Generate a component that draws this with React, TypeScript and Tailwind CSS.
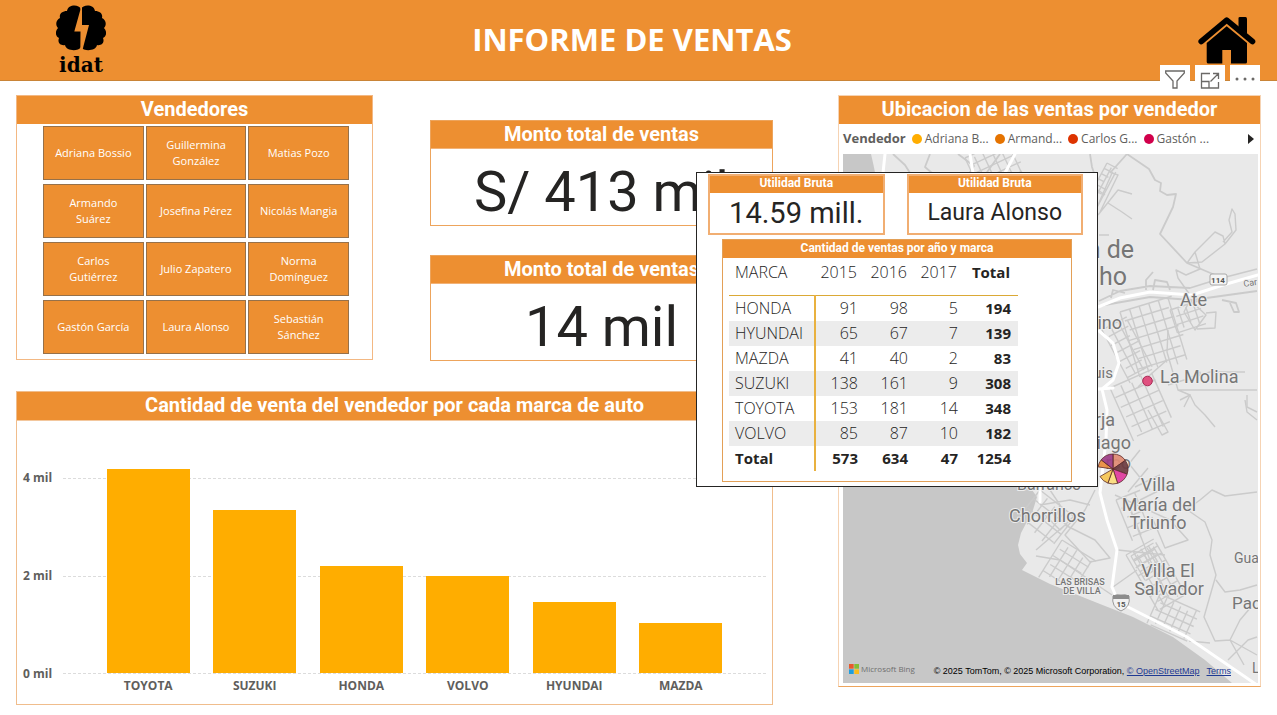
import React from "react";

const SELLERS = [
  "Adriana Bossio",
  "Guillermina González",
  "Matias Pozo",
  "Armando Suárez",
  "Josefina Pérez",
  "Nicolás Mangia",
  "Carlos Gutiérrez",
  "Julio Zapatero",
  "Norma Domínguez",
  "Gastón García",
  "Laura Alonso",
  "Sebastián Sánchez",
];

const BARS = [
  { label: "TOYOTA", value: 4.19 },
  { label: "SUZUKI", value: 3.35 },
  { label: "HONDA", value: 2.2 },
  { label: "VOLVO", value: 2.0 },
  { label: "HYUNDAI", value: 1.46 },
  { label: "MAZDA", value: 1.03 },
];

const ROWS = [
  ["HONDA", 91, 98, 5, 194],
  ["HYUNDAI", 65, 67, 7, 139],
  ["MAZDA", 41, 40, 2, 83],
  ["SUZUKI", 138, 161, 9, 308],
  ["TOYOTA", 153, 181, 14, 348],
  ["VOLVO", 85, 87, 10, 182],
];

const LEGEND = [
  { name: "Adriana B...", dot: "bg-[#ffad00]" },
  { name: "Armand...", dot: "bg-[#e57300]" },
  { name: "Carlos G...", dot: "bg-[#dd3300]" },
  { name: "Gastón ...", dot: "bg-[#d1004b]" },
];

function Logo() {
  return (
    <div className="flex w-[50px] flex-col items-center gap-[2px] pt-[2px]">
      <svg viewBox="0 0 50 46" className="h-[46px] w-[50px]" aria-hidden="true">
        <path d="M25 4C23-1 12-1 11 6C6 6 3 9 4 13C0 15-1 20 2 23C-1 26-1 31 3 33C1 38 5 41 9 40C10 46 22 47 25 42Z" />
        <path d="M25 4C27-1 38-1 39 6C44 6 47 9 46 13C50 15 51 20 48 23C51 26 51 31 47 33C49 38 45 41 41 40C40 46 28 47 25 42Z" />
        <path d="M24.500 0L24.300 5L18.300 26.500H24.500L24.300 46H26.300L27.500 41L33 20H26L26 0Z" fill="#ed8f31" />
      </svg>
      <span className="font-['DejaVu_Serif',serif] text-[20px] leading-[24px] font-bold text-black">idat</span>
    </div>
  );
}

function HomeIcon() {
  return (
    <svg viewBox="0 0 58 48" className="h-[48px] w-[58px]" aria-hidden="true">
      <path d="M40.500 2Q40.500 1 42 1H47.500Q49 1 49 3V18L40.500 11Z" />
      <path d="M3.200 25.500L28.700 4.200L54.500 25.500" fill="none" stroke="#000" strokeWidth="5.600" strokeLinecap="round" strokeLinejoin="round" />
      <path d="M8.700 27L28.700 10.300L49 27V46Q49 47.500 47.500 47.500H33V34H24.300V47.500H10.500Q8.700 47.500 8.700 46Z" />
    </svg>
  );
}

function Kpi({ title, value }: { title: string; value: string }) {
  return (
    <section className="border border-[#eda45c] bg-white">
      <h2 className="bg-[#ed8f31] pb-px text-center font-['Roboto',sans-serif] text-[20px] leading-[26px] font-bold text-white">
        {title}
      </h2>
      <p className="border-t border-[#f2b277] pt-[10px] text-center font-['Roboto',sans-serif] text-[56px] leading-[66px] text-[#252423]">
        {value}
      </p>
    </section>
  );
}

function MiniCard({ value, big }: { value: string; big?: boolean }) {
  return (
    <section className="flex-1 border-2 border-[#f1ae72] bg-white">
      <h3 className="bg-[#ed8f31] pb-[2px] text-center font-['Roboto',sans-serif] text-[12px] leading-[15px] font-bold text-white">
        Utilidad Bruta
      </h3>
      <p
        className={
          big
            ? "text-center font-['Roboto',sans-serif] text-[29px] leading-[40px] text-[#252423]"
            : "text-center font-['Roboto',sans-serif] text-[23px] leading-[40px] text-[#252423]"
        }
      >
        {value}
      </p>
    </section>
  );
}

function SalesTable() {
  return (
    <table className="w-[289px] table-fixed border-collapse font-['Open_Sans',sans-serif] text-[16px] text-[#252423]">
      <thead>
        <tr className="h-[36px] border-b border-[#dba936] align-top leading-[26px]">
          <th className="w-[86px] pl-[6px] text-left font-light">MARCA</th>
          <th className="pr-2 text-right font-light">2015</th>
          <th className="pr-2 text-right font-light">2016</th>
          <th className="pr-2 text-right font-light">2017</th>
          <th className="w-[53px] pr-2 text-right text-[15px] font-bold">Total</th>
        </tr>
      </thead>
      <tbody>
        {ROWS.map((r) => (
          <tr key={r[0]} className="h-[25px] leading-[25px] even:bg-[#ececec]">
            <th className="border-r-2 border-[#e9b13f] pl-[6px] text-left font-light">{r[0]}</th>
            <td className="pr-[7px] text-right font-light">{r[1]}</td>
            <td className="pr-[7px] text-right font-light">{r[2]}</td>
            <td className="pr-[7px] text-right font-light">{r[3]}</td>
            <td className="pr-[7px] text-right text-[15px] font-bold">{r[4]}</td>
          </tr>
        ))}
        <tr className="h-[25px] text-[15px] leading-[25px] font-bold">
          <th className="border-r-2 border-[#e9b13f] pl-[6px] text-left">Total</th>
          <td className="pr-[7px] text-right">573</td>
          <td className="pr-[7px] text-right">634</td>
          <td className="pr-[7px] text-right">47</td>
          <td className="pr-[7px] text-right">1254</td>
        </tr>
      </tbody>
    </table>
  );
}

function Chart() {
  return (
    <div className="flex pt-[20px] pr-[6px] pb-[9px] pl-[6px] font-['Open_Sans',sans-serif] text-[12px] font-bold text-[#605e5c]">
      <div className="flex w-[40px] flex-col justify-between pt-[28px] pb-[12px] leading-[18px]">
        <span>4 mil</span>
        <span>2 mil</span>
        <span>0 mil</span>
      </div>
      <div className="flex-1">
        <div className="relative h-[233px]">
          <div className="flex h-full flex-col justify-between pt-[37px]">
            <div className="border-t border-dashed border-[#dcdcdc]" />
            <div className="border-t border-dashed border-[#dcdcdc]" />
            <div className="border-t border-dashed border-[#dcdcdc]" />
          </div>
          <div className="absolute inset-0 flex items-end px-[32px] pb-px">
            {BARS.map((b) => (
              <div key={b.label} className="flex flex-1 justify-center">
                <div className="w-[78%] bg-[#ffad00]" style={{ height: Math.round(b.value * 48.7) }} />
              </div>
            ))}
          </div>
        </div>
        <div className="flex px-[32px] pt-[3px] leading-[18px]">
          {BARS.map((b) => (
            <span key={b.label} className="flex-1 text-center">
              {b.label}
            </span>
          ))}
        </div>
      </div>
    </div>
  );
}

type GridProps = { x: number; y: number; w: number; h: number; step: number; rot: number };

function Streets({ x, y, w, h, step, rot }: GridProps) {
  const parts: string[] = [];
  for (let i = 0; i <= w; i += step) parts.push(`M${i} ${(i * 7) % 5}V${h - ((i * 3) % 7)}`);
  for (let j = 0; j <= h; j += step) parts.push(`M${(j * 5) % 6} ${j}H${w - ((j * 3) % 8)}`);
  return <path d={parts.join("")} transform={`translate(${x} ${y}) rotate(${rot})`} />;
}

const SLICES = [
  { from: -90, to: -35, color: "#e08a72" },
  { from: -35, to: 20, color: "#6e3b40" },
  { from: 20, to: 72, color: "#e0389c" },
  { from: 72, to: 110, color: "#fbdc7c" },
  { from: 110, to: 150, color: "#f5c451" },
  { from: 188, to: 218, color: "#e88b3c" },
  { from: 218, to: 270, color: "#9b3a86" },
];

function slicePath(from: number, to: number) {
  const p = (a: number) => {
    const t = (a * Math.PI) / 180;
    return `${(1113 + 15 * Math.cos(t)).toFixed(1)} ${(469 + 15 * Math.sin(t)).toFixed(1)}`;
  };
  return `M1113 469L${p(from)}A15 15 0 0 1 ${p(to)}Z`;
}

function MapView() {
  return (
    <svg
      viewBox="843 154 415 529"
      preserveAspectRatio="xMaxYMax slice"
      className="absolute inset-0 h-full w-full bg-[#e9e9e9]"
      role="img"
      aria-label="Mapa de ventas"
    >
      <path
        d="M842 154H871Q876 175 880 200L960 400L1030 487L1037 497L1033 510L1021 533L1018 545L1020 554L1027 563L1022 570L1050 584L1100 604L1133 617L1173 637L1205 660L1232 683H842Z"
        fill="#c7c7c7"
      />
      <g fill="none" stroke="#cbcbcb" strokeWidth="1.400" strokeLinejoin="round">
        <path d="M893 154L905 165L910 173M930 154L925 167L940 180M958 154L974 166L965 180M1000 154L985 175M1090 154L1092 167L1094 173M1110 173L1127 154L1149 169L1155 180L1161 183L1160 191L1167 195L1176 194L1173 207L1160 234L1187 263L1215 275" strokeWidth="1.800" />
        <path d="M1098 215L1118 190L1132 194M1108 203L1122 212L1132 219M1099 235H1109M1098 205L1112 173L1118 175L1100 212M1105 195L1098 190" />
        <path d="M1187 263L1195 252L1215 232L1223 236L1225 244L1202 262L1187 263M1223 242L1232 232L1229 220L1232 209L1235 214L1236 230L1225 244M1195 252L1200 269L1186 275L1176 270L1178 278L1190 295" />
        <path d="M1099 301L1120 291L1150 286L1190 288L1222 278L1257 269M1099 306L1150 297L1192 300L1257 291M1111 298L1113 290L1125 293M1146 290V280L1153 272M1153 290L1155 280L1167 282L1170 290M1222 300L1236 303L1239 312L1234 312L1230 303" strokeWidth="1.800" />
        <path d="M1190 300L1206 315L1195 330L1184 312ZM1206 313L1216 312L1215 328L1197 329M1168 330L1167 352L1178 390L1190 395L1184 407M1168 385L1210 372H1245M1178 390L1257 390M1190 378L1200 372L1201 380M1247 395V407L1257 412M1167 360L1150 375L1138 387" />
        <path d="M1180 400L1190 395L1195 405L1205 415L1215 427M1148 410L1162 435L1168 432L1154 407M1245 400L1247 412L1257 420" />
        <path d="M1186 510L1200 500L1212 490L1225 496L1257 492M1189 511L1205 522L1212 540L1210 555L1216 575L1204 617L1215 641L1230 640L1240 620L1257 600M1216 580L1225 592L1240 590L1257 585M1230 640L1244 665M1230 640L1257 655M1189 641L1210 643M1228 660L1248 640L1257 637" />
        <path d="M1128 504L1150 560L1165 590M1115 495L1170 520L1188 540L1165 548L1152 517M1113 587L1137 570M1118 550L1165 555M1140 450L1120 475M1148 468L1128 492M1160 475L1135 487M1170 485L1140 500M1130 465L1150 490" />
        <path d="M1036 550L1065 525L1095 540L1110 558L1090 562L1065 535L1085 510L1095 490M1036 556L1060 560L1112 595M1045 515L1060 530L1075 515M1040 505L1070 500L1090 505M1050 490L1060 505L1055 520" />
        <Streets x={1120} y={312} w={54} h={68} step={10} rot={-17} />
        <Streets x={1102} y={330} w={28} h={60} step={9} rot={-28} />
        <Streets x={1170} y={310} w={30} h={24} step={8} rot={-18} />
        <Streets x={1110} y={388} w={46} h={58} step={11} rot={-24} />
        <Streets x={1126} y={555} w={32} h={64} step={8} rot={-30} />
        <Streets x={1131} y={556} w={26} h={28} step={6} rot={-30} />
        <Streets x={1160} y={594} w={44} h={32} step={8} rot={24} />
        <Streets x={1062} y={540} w={40} h={44} step={9} rot={32} />
        <Streets x={1040} y={490} w={46} h={40} step={11} rot={38} />
        <Streets x={1116} y={500} w={26} h={44} step={10} rot={-22} />
        <Streets x={965} y={158} w={50} h={40} step={9} rot={-25} />
        <Streets x={1107} y={163} w={12} h={44} step={6} rot={28} />
      </g>
      <g fill="none" stroke="#fff" strokeWidth="3" strokeLinecap="round">
        <path d="M885 154L883 173M970 154L973 173M1015 154L1005 173" />
        <path d="M1098 307L1120 298L1150 292L1192 295L1223 285L1258 275" />
        <path d="M1098 330L1113 343L1119 363L1113 380L1102 389L1107 410L1106 440L1100 493L1107 520L1117 550L1112 587L1115 594M1128 607L1187 637L1257 685M1098 389L1113 388M1040 487V502" />
      </g>
      <g fill="#767676" stroke="#ededed" strokeWidth="2" paintOrder="stroke" fontFamily="Roboto, sans-serif" fontSize="18">
        <g fontSize="25">
          <text x="1134" y="258" textAnchor="end">n de</text>
          <text x="1127" y="285" textAnchor="end">ho</text>
        </g>
        <text x="1180" y="306">Ate</text>
        <text x="1122" y="329" textAnchor="end">ino</text>
        <text x="1113" y="378" textAnchor="end" fontSize="15">uis</text>
        <text x="1160" y="383">La Molina</text>
        <text x="1115" y="426" textAnchor="end">rja</text>
        <text x="1131" y="449" textAnchor="end">iago</text>
        <text x="1131" y="469" textAnchor="end">rco</text>
        <text x="1017" y="490" fontSize="16">Barranco</text>
        <text x="1009" y="522">Chorrillos</text>
        <g textAnchor="middle">
          <text x="1158" y="491">Villa</text>
          <text x="1159" y="511">María del</text>
          <text x="1158" y="529">Triunfo</text>
          <text x="1168" y="577">Villa El</text>
          <text x="1169" y="595">Salvador</text>
        </g>
        <text x="1234" y="563" fontSize="14">Gua</text>
        <text x="1232" y="609" fontSize="17">Pac</text>
        <text x="1252" y="673" fontSize="14">L</text>
        <text x="1244" y="287" fontSize="9" transform="rotate(-10 1244 287)">Car</text>
        <g textAnchor="middle" fontSize="9" fontWeight="500">
          <text x="1080" y="585">LAS BRISAS</text>
          <text x="1082" y="594">DE VILLA</text>
        </g>
      </g>
      <g fontFamily="Roboto, sans-serif" fontSize="8" fontWeight="700" textAnchor="middle" fill="#555">
        <rect x="1210" y="274" width="17" height="11" rx="2" fill="#f4f4f4" stroke="#a9a9a9" />
        <text x="1218" y="283">114</text>
        <path d="M1113 596Q1117 594 1121 595Q1125 594 1129 596Q1131 607 1121 611Q1111 607 1113 596Z" fill="#f2f2f2" stroke="#9a9a9a" />
        <path d="M1113 595H1129V599H1113Z" fill="#8c8c8c" />
        <text x="1121" y="607">15</text>
      </g>
      <circle cx="1147.500" cy="381" r="4.800" fill="#e0507f" stroke="#a92b56" />
      <g stroke="#5b2a2a" strokeWidth="0.800" fillOpacity="0.920">
        {SLICES.map((s) => (
          <path key={s.from} d={slicePath(s.from, s.to)} fill={s.color} />
        ))}
      </g>
    </svg>
  );
}

function VisualToolbar() {
  return (
    <div className="absolute -top-[31px] right-0 flex gap-[5px] text-[#6b6967]">
      <button type="button" aria-label="Filtros" className="flex h-[30px] w-[30px] items-center justify-center bg-white">
        <svg viewBox="0 0 20 20" className="h-5 w-5" fill="none" stroke="currentColor" strokeWidth="1.300">
          <path d="M.700 1H19.300V3L12 11V18H8V11L.700 3Z" />
        </svg>
      </button>
      <button type="button" aria-label="Modo de enfoque" className="flex h-[30px] w-[30px] items-center justify-center bg-white">
        <svg viewBox="0 0 20 20" className="h-5 w-5" fill="none" stroke="currentColor" strokeWidth="1.300">
          <path d="M10 3.500H1.500V18H18.500V12M1.500 11.500H9V18M10.500 11.500L18 4M13 3.500H18.500V9" />
        </svg>
      </button>
      <button type="button" aria-label="Más opciones" className="flex h-[30px] w-[30px] items-center justify-center bg-white">
        <svg viewBox="0 0 20 20" className="h-5 w-5" fill="currentColor">
          <circle cx="2" cy="9" r="1.500" />
          <circle cx="10" cy="9" r="1.500" />
          <circle cx="18" cy="9" r="1.500" />
        </svg>
      </button>
    </div>
  );
}

export default function App() {
  return (
    <div className="relative min-h-screen overflow-hidden bg-white">
      <header className="grid h-[81px] grid-cols-[1fr_auto_1fr] items-center border-b border-[#c98437] bg-[#ed8f31] pr-[21px] pl-14">
        <Logo />
        <h1 className="pr-[48px] pb-[2px] font-['Open_Sans',sans-serif] text-[31px] font-bold text-white">INFORME DE VENTAS</h1>
        <a href="#inicio" aria-label="Inicio" className="justify-self-end">
          <HomeIcon />
        </a>
      </header>

      <main className="grid grid-cols-[757fr_423fr] items-start gap-[65px] px-4 pt-[14px]">
        <div className="flex flex-col gap-[30px]">
          <div className="flex items-start justify-between">
            <section className="w-[357px] border border-[#f3b883] pb-[5px]">
              <h2 className="bg-[#ed8f31] pb-[2px] text-center font-['Roboto',sans-serif] text-[20px] leading-[26px] font-bold text-white">
                Vendedores
              </h2>
              <div className="grid grid-cols-3 gap-x-[2px] gap-y-[4px] pt-[2px] pr-[23px] pl-[26px]">
                {SELLERS.map((s) => (
                  <button
                    key={s}
                    type="button"
                    className="h-[54px] border border-[#96714a] bg-[#ed8f31] px-[8px] font-['Open_Sans',sans-serif] text-[11px] leading-[16px] text-white"
                  >
                    {s}
                  </button>
                ))}
              </div>
            </section>
            <div className="flex w-[343px] flex-col gap-[29px] pt-[25px]">
              <Kpi title="Monto total de ventas" value="S/ 413 mil" />
              <Kpi title="Monto total de ventas" value="14 mil" />
            </div>
          </div>

          <section className="border border-[#f0bd8c]">
            <h2 className="border-b border-[#f3c79d] bg-[#ed8f31] pb-[2px] text-center font-['Roboto',sans-serif] text-[20px] leading-[26px] font-bold text-white">
              Cantidad de venta del vendedor por cada marca de auto
            </h2>
            <Chart />
          </section>
        </div>

        <section className="relative border border-[#f6d3b3] border-b-[#eda45c] pb-[3px]">
          <VisualToolbar />
          <h2 className="bg-[#ed8f31] pb-[2px] text-center font-['Roboto',sans-serif] text-[20px] leading-[26px] font-bold text-white">
            Ubicacion de las ventas por vendedor
          </h2>
          <div className="flex h-[30px] items-center gap-[6px] px-1 font-['Open_Sans',sans-serif] text-[12px] text-[#605e5c]">
            <span className="text-[13px] font-bold">Vendedor</span>
            {LEGEND.map((l) => (
              <span key={l.name} className="flex items-center gap-[3px] whitespace-nowrap">
                <span className={`h-[10px] w-[10px] rounded-full ${l.dot}`} />
                {l.name}
              </span>
            ))}
            <button type="button" aria-label="Siguiente" className="ml-auto pr-[2px]">
              <svg viewBox="0 0 6 10" className="h-[10px] w-[6px]" fill="#252423">
                <path d="M0 0L6 5L0 10Z" />
              </svg>
            </button>
          </div>
          <div className="relative mr-[2px] ml-1 h-[529px] overflow-hidden">
            <MapView />
            <div className="absolute right-0 bottom-[2px] left-0 flex items-center pr-[27px] pl-[6px] font-['Liberation_Sans',sans-serif] text-[9px] leading-[16px] whitespace-nowrap text-black">
              <svg viewBox="0 0 10 10" className="mb-[5px] h-[10px] w-[10px]" aria-hidden="true">
                <path d="M0 0H4.700V4.700H0Z" fill="#e8592b" />
                <path d="M5.300 0H10V4.700H5.300Z" fill="#84bd32" />
                <path d="M0 5.300H4.700V10H0Z" fill="#1f9ede" />
                <path d="M5.300 5.300H10V10H5.300Z" fill="#fcbc1c" />
              </svg>
              <span className="mb-[4px] pl-[2px] font-['Open_Sans',sans-serif] text-[8px] text-[#6f6f6f]">Microsoft Bing</span>
              <span className="ml-auto">© 2025 TomTom, © 2025 Microsoft Corporation,&nbsp;</span>
              <a href="#osm" className="text-[#1f3a93] underline">
                © OpenStreetMap
              </a>
              <a href="#terms" className="ml-[7px] text-[#1f3a93] underline">
                Terms
              </a>
            </div>
          </div>
        </section>
      </main>

      <aside className="absolute top-[172px] left-[696px] h-[315px] w-[402px] border border-[#252423] bg-white pt-[1px]">
        <div className="flex items-start gap-[22px] pr-[14px] pl-[11px]">
          <MiniCard value="14.59 mill." big />
          <MiniCard value="Laura Alonso" />
        </div>
        <section className="mt-[4px] mr-[25px] ml-[25px] border border-[#e3a057] pb-[10px]">
          <h3 className="bg-[#ed8f31] pb-[2px] text-center font-['Roboto',sans-serif] text-[12px] leading-[16px] font-bold text-white">
            Cantidad de ventas por año y marca
          </h3>
          <div className="pt-[1px] pl-[6px]">
            <SalesTable />
          </div>
        </section>
      </aside>
    </div>
  );
}
